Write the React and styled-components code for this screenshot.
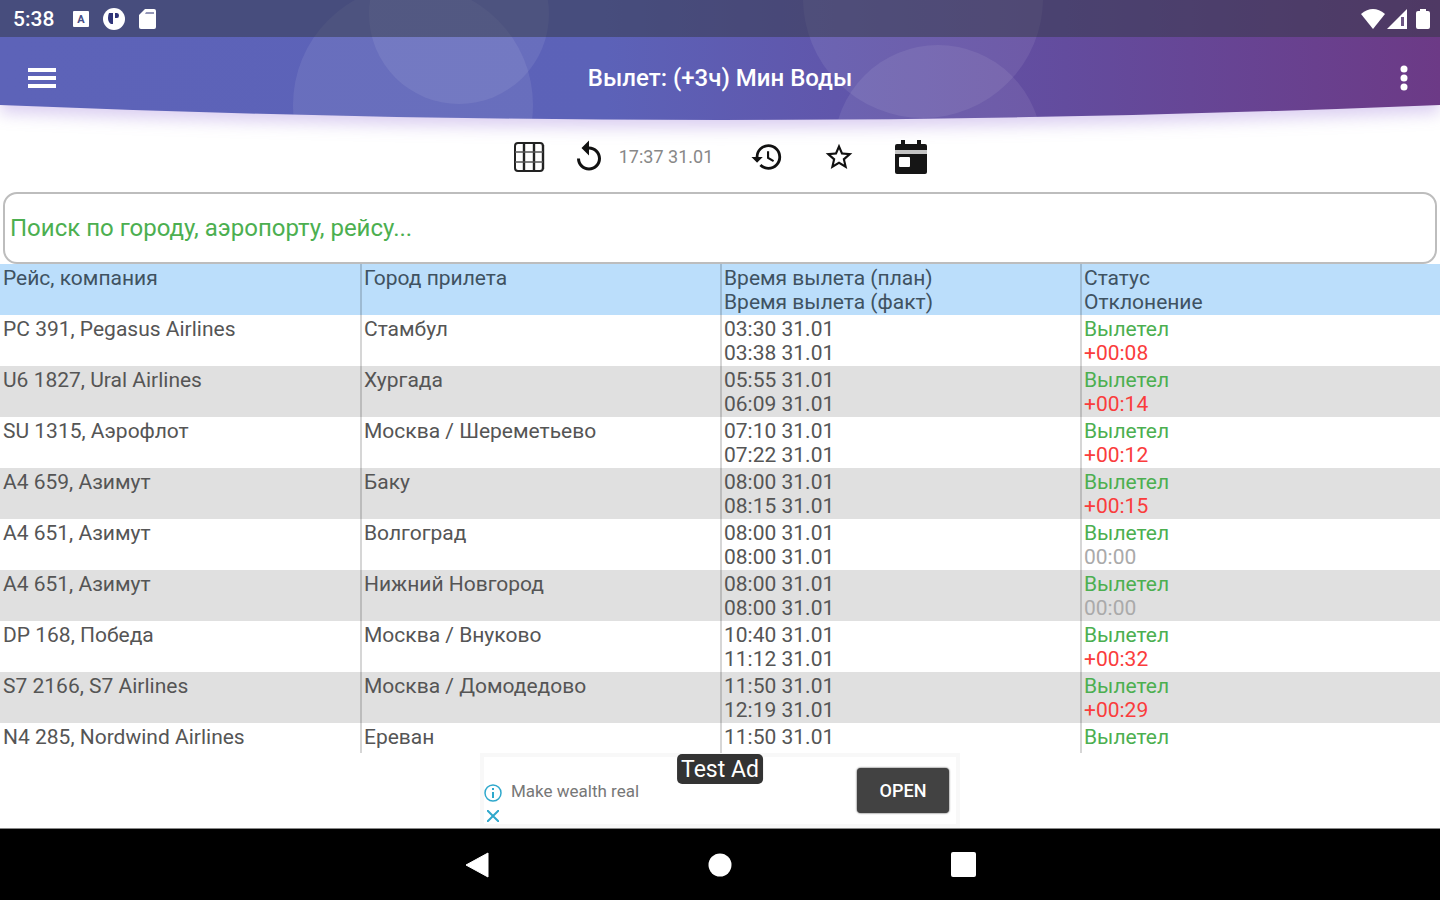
import React from 'react';
import styled, { createGlobalStyle, css } from 'styled-components';
import { MdHistory, MdReplay, MdStarBorder } from 'react-icons/md';

const GlobalStyle = createGlobalStyle`
  * {
    box-sizing: border-box;
  }
  body {
    margin: 0;
    background: white;
    font-family: Roboto, 'Noto Sans', sans-serif;
  }
  button {
    border: 0;
    padding: 0;
    background: none;
    font: inherit;
    color: inherit;
    cursor: pointer;
  }
  svg {
    display: block;
  }
`;

const Screen = styled.div`
  --green: #4caf50;
  --red: #fa3c3c;
  height: 100vh;
  display: flex;
  flex-direction: column;
`;

const HeaderStyles = styled.header`
  position: relative;
  flex: none;
  color: white;
  .backdrop {
    position: absolute;
    inset: 0;
    width: 100%;
    height: 100%;
    overflow: visible;
    filter: drop-shadow(0 8px 8px rgba(112, 64, 200, 0.25));
  }
`;

const StatusBar = styled.div`
  position: relative;
  height: 37px;
  padding: 0 10px 0 13px;
  display: flex;
  align-items: center;
  justify-content: space-between;
  background: rgba(50, 55, 65, 0.5);
  font-size: 21px;
  font-weight: 500;
`;

const StatusGroup = styled.div`
  display: flex;
  align-items: center;
  gap: ${(props) => props.$gap}px;
`;

const AppBar = styled.div`
  position: relative;
  height: 82px;
  padding: 0 18px 0 24px;
  display: grid;
  grid-template-columns: 36px 1fr 36px;
  align-items: center;
  h1 {
    margin: 0;
    padding-right: 6px;
    font-size: 24px;
    font-weight: 500;
    line-height: 28px;
    text-align: center;
  }
`;

const IconButton = styled.button`
  width: 36px;
  height: 36px;
  display: grid;
  place-items: center;
`;

const Toolbar = styled.div`
  position: relative;
  flex: none;
  height: 73px;
  padding-top: 2px;
  display: flex;
  align-items: center;
  justify-content: center;
  gap: 36px;
  color: #111;
`;

const ToolGroup = styled.div`
  display: flex;
  align-items: center;
  gap: ${(props) => props.$gap}px;
  time {
    font-size: 18px;
    color: #888;
  }
`;

const SearchInput = styled.input`
  flex: none;
  height: 72px;
  margin: 0 3px;
  padding: 0 5px;
  border: 2px solid #bdbdbd;
  border-radius: 14px;
  background: white;
  font-family: inherit;
  font-size: 24px;
  color: var(--green);
  outline: none;
  &::placeholder {
    color: var(--green);
    opacity: 1;
  }
`;

const TableScroll = styled.main`
  flex: 1;
  min-height: 0;
  overflow-y: auto;
  scrollbar-width: none;
`;

const FlightTable = styled.table`
  width: 100%;
  table-layout: fixed;
  border-collapse: separate;
  border-spacing: 0;
  font-size: 21px;
  line-height: 24px;
  color: #555;
  th,
  td {
    height: 51px;
    padding: 2px 3px 1px;
    font-weight: 400;
    text-align: left;
    vertical-align: top;
    white-space: nowrap;
  }
  th + th,
  td + td {
    padding-left: 2px;
    border-left: 2px solid rgba(0, 0, 0, 0.16);
  }
  thead {
    background: #bbdefb;
    color: #3f5261;
  }
  tbody tr:nth-child(even) {
    background: #e0e0e0;
  }
`;

const Line = styled.div`
  ${(props) =>
    props.$tone &&
    css`
      color: ${props.$tone};
    `}
`;

const AdBanner = styled.aside`
  position: relative;
  flex: none;
  align-self: center;
  width: 480px;
  max-width: 100%;
  height: 75px;
  padding: 0 7px 0 0;
  border: 4px solid #f8f8f8;
  display: flex;
  align-items: center;
  font-size: 17px;
  color: #777;
`;

const AdChoices = styled.div`
  width: 18px;
  margin-right: 9px;
  padding-top: 24px;
  display: grid;
  gap: 8px;
  justify-items: center;
`;

const AdLabel = styled.span`
  position: absolute;
  top: -3px;
  left: 50%;
  transform: translateX(-50%);
  height: 30px;
  padding: 0 4px;
  border-radius: 5px;
  background: #333;
  color: white;
  font-size: 23px;
  line-height: 32px;
  white-space: nowrap;
`;

const OpenButton = styled.button`
  && {
    width: 92px;
    height: 45px;
    margin-left: auto;
    border-radius: 4px;
    background: #424242;
    box-shadow: 0 0 2px #222;
    color: white;
    font-size: 18px;
    font-weight: 500;
  }
`;

const NavBar = styled.nav`
  flex: none;
  height: 72px;
  border-top: 1px solid #888;
  background: black;
  color: white;
  display: flex;
  align-items: center;
  justify-content: center;
  gap: 207px;
`;

const flights = [
  ['PC 391, Pegasus Airlines', 'Стамбул', '03:30', '03:38', '+00:08'],
  ['U6 1827, Ural Airlines', 'Хургада', '05:55', '06:09', '+00:14'],
  ['SU 1315, Аэрофлот', 'Москва / Шереметьево', '07:10', '07:22', '+00:12'],
  ['A4 659, Азимут', 'Баку', '08:00', '08:15', '+00:15'],
  ['A4 651, Азимут', 'Волгоград', '08:00', '08:00', '00:00'],
  ['A4 651, Азимут', 'Нижний Новгород', '08:00', '08:00', '00:00'],
  ['DP 168, Победа', 'Москва / Внуково', '10:40', '11:12', '+00:32'],
  ['S7 2166, S7 Airlines', 'Москва / Домодедово', '11:50', '12:19', '+00:29'],
  ['N4 285, Nordwind Airlines', 'Ереван', '11:50'],
];

function Backdrop() {
  return (
    <svg
      className="backdrop"
      viewBox="0 0 1440 119"
      preserveAspectRatio="none"
      aria-hidden="true"
    >
      <defs>
        <linearGradient id="sky" x1="0" x2="1" y1="0" y2="0">
          <stop offset="0" stopColor="#5d63b8" />
          <stop offset="0.42" stopColor="#5c62b8" />
          <stop offset="0.58" stopColor="#6056ab" />
          <stop offset="0.74" stopColor="#634c9e" />
          <stop offset="1" stopColor="#6c3a86" />
        </linearGradient>
        <clipPath id="curve">
          <path d="M0 0H1440V105Q720 135 0 105Z" />
        </clipPath>
      </defs>
      <g clipPath="url(#curve)">
        <rect width="1440" height="125" fill="url(#sky)" />
        <g fill="white" fillOpacity="0.08">
          <circle cx="413" cy="105" r="120" />
          <circle cx="459" cy="14" r="90" />
          <circle cx="923" cy="-2" r="120" />
          <circle cx="938" cy="149" r="104" />
        </g>
      </g>
    </svg>
  );
}

function Header() {
  return (
    <HeaderStyles>
      <Backdrop />
      <StatusBar>
        <StatusGroup $gap={19}>
          <span>5:38</span>
          <StatusGroup $gap={14}>
            <svg width="16" height="16" viewBox="0 0 16 16">
              <rect width="16" height="16" rx="1" fill="white" />
              <text
                x="8"
                y="12"
                fontSize="11"
                fontWeight="700"
                textAnchor="middle"
                fill="#484e86"
              >
                A
              </text>
            </svg>
            <svg width="22" height="22" viewBox="0 0 22 22">
              <circle cx="11" cy="11" r="11" fill="white" />
              <path
                d="M6 5h4v11H8Q5 14 5 10Q5 7 6 5ZM12 5h2q2 0 2 2.500t-2 2.500h-2Z"
                fill="#2f3479"
              />
            </svg>
            <svg width="17" height="20" viewBox="0 0 17 20">
              <path d="M6 0H15Q17 0 17 2V18Q17 20 15 20H2Q0 20 0 18V6Z" fill="white" />
              <path d="M7 3h8v2H6Z" fill="#9497b8" />
            </svg>
          </StatusGroup>
        </StatusGroup>
        <StatusGroup $gap={2}>
          <svg width="24" height="20" viewBox="0 0 24 20">
            <path d="M0 5Q12-5 24 5L12 20Z" fill="white" />
          </svg>
          <svg width="27" height="20" viewBox="0 0 27 20">
            <path d="M20 0V20H0Z" fill="white" />
            <path d="M14 8h3v9h-3Z" fill="#6d5684" />
          </svg>
          <svg width="14" height="20" viewBox="0 0 14 20">
            <path d="M4 0h6v2h2q2 0 2 2v14q0 2-2 2H2q-2 0-2-2V4q0-2 2-2h2Z" fill="white" />
          </svg>
        </StatusGroup>
      </StatusBar>
      <AppBar>
        <IconButton aria-label="Меню">
          <svg width="28" height="20" viewBox="0 0 28 20" fill="white">
            <path d="M0 0h28v4H0ZM0 8h28v4H0ZM0 16h28v4H0Z" />
          </svg>
        </IconButton>
        <h1>Вылет: (+3ч) Мин Воды</h1>
        <IconButton aria-label="Ещё">
          <svg width="8" height="26" viewBox="0 0 8 26" fill="white">
            <circle cx="4" cy="4" r="3.5" />
            <circle cx="4" cy="13" r="3.5" />
            <circle cx="4" cy="22" r="3.5" />
          </svg>
        </IconButton>
      </AppBar>
    </HeaderStyles>
  );
}

function GridIcon() {
  return (
    <svg width="32" height="32" viewBox="0 0 32 32" fill="none" stroke="#222">
      <rect x="2" y="2" width="28" height="28" rx="3" strokeWidth="2" />
      <path d="M11 2V30M21 2V30M30 4V28" strokeWidth="2.4" />
      <path d="M2 11H30M2 21H30" strokeWidth="1.6" stroke="#555" />
    </svg>
  );
}

function CalendarIcon() {
  return (
    <svg width="34" height="36" viewBox="0 0 34 36" fill="#151515">
      <path d="M7 1h4v4h12V1h4v4h4q2 0 2 2v4H1V7q0-2 2-2h4Z" />
      <path d="M1 11h32v4H1Z" fill="#c4c4c4" />
      <path d="M1 15h32v18q0 2-2 2H3q-2 0-2-2Z" />
      <rect x="5" y="18" width="11" height="10" rx="1" fill="white" />
    </svg>
  );
}

function Flight({ flight }) {
  const [number, city, plan, fact, delay] = flight;
  const late = delay && delay.startsWith('+');
  return (
    <tr>
      <td>{number}</td>
      <td>{city}</td>
      <td>
        <Line>{plan} 31.01</Line>
        {fact && <Line>{fact} 31.01</Line>}
      </td>
      <td>
        <Line $tone="var(--green)">Вылетел</Line>
        {delay && <Line $tone={late ? 'var(--red)' : '#aaa'}>{delay}</Line>}
      </td>
    </tr>
  );
}

export default function App() {
  return (
    <Screen>
      <GlobalStyle />
      <Header />
      <Toolbar>
        <ToolGroup $gap={12}>
          <ToolGroup $gap={24}>
            <IconButton aria-label="Таблица">
              <GridIcon />
            </IconButton>
            <IconButton aria-label="Обновить">
              <MdReplay size={36} />
            </IconButton>
          </ToolGroup>
          <time>17:37 31.01</time>
        </ToolGroup>
        <IconButton aria-label="История">
          <MdHistory size={34} />
        </IconButton>
        <IconButton aria-label="Избранное">
          <MdStarBorder size={32} />
        </IconButton>
        <IconButton aria-label="Календарь">
          <CalendarIcon />
        </IconButton>
      </Toolbar>
      <SearchInput
        type="text"
        aria-label="Поиск"
        placeholder="Поиск по городу, аэропорту, рейсу..."
      />
      <TableScroll>
        <FlightTable>
          <thead>
            <tr>
              <th>Рейс, компания</th>
              <th>Город прилета</th>
              <th>
                <Line>Время вылета (план)</Line>
                <Line>Время вылета (факт)</Line>
              </th>
              <th>
                <Line>Статус</Line>
                <Line>Отклонение</Line>
              </th>
            </tr>
          </thead>
          <tbody>
            {flights.map((flight) => (
              <Flight key={flight[0] + flight[1]} flight={flight} />
            ))}
          </tbody>
        </FlightTable>
      </TableScroll>
      <AdBanner>
        <AdChoices>
          <svg width="18" height="18" viewBox="0 0 18 18" fill="none" stroke="#2fa8cc">
            <circle cx="9" cy="9" r="8" strokeWidth="1.5" />
            <path d="M9 4v2M9 8v6" strokeWidth="2" />
          </svg>
          <svg width="12" height="12" viewBox="0 0 12 12" stroke="#2fa8cc">
            <path d="M0 0L12 12M12 0L0 12" strokeWidth="2" />
          </svg>
        </AdChoices>
        <span>Make wealth real</span>
        <AdLabel>Test Ad</AdLabel>
        <OpenButton>OPEN</OpenButton>
      </AdBanner>
      <NavBar>
        <IconButton aria-label="Назад">
          <svg width="24" height="26" viewBox="0 0 24 26" fill="white">
            <path d="M23 1V25L1 13Z" stroke="white" strokeLinejoin="round" />
          </svg>
        </IconButton>
        <IconButton aria-label="Домой">
          <svg width="24" height="24" viewBox="0 0 24 24" fill="white">
            <circle cx="12" cy="12" r="11.5" />
          </svg>
        </IconButton>
        <IconButton aria-label="Недавние">
          <svg width="25" height="25" viewBox="0 0 25 25" fill="white">
            <rect width="25" height="25" rx="2" />
          </svg>
        </IconButton>
      </NavBar>
    </Screen>
  );
}
